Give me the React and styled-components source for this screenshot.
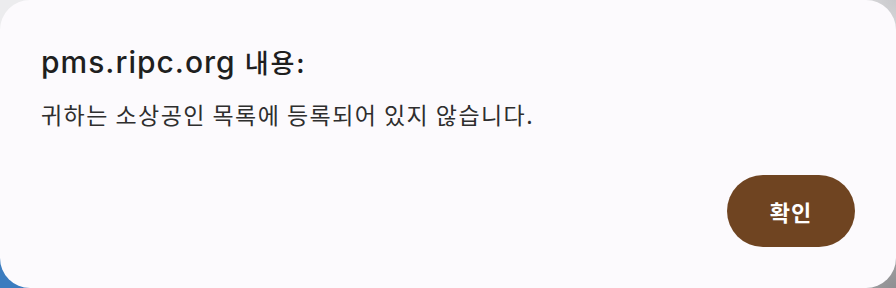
import React from 'react';
import styled, { createGlobalStyle } from 'styled-components';

const GlobalStyle = createGlobalStyle`
  html, body {
    margin: 0;
    padding: 0;
  }
  body {
    width: 896px;
    height: 288px;
    overflow: hidden;
  }
`;

const Backdrop = styled.div`
  width: 896px;
  height: 288px;
  background:
    radial-gradient(circle at 0% 100%, #3b7cbf 0, #3b7cbf 40px, transparent 41px),
    radial-gradient(circle at 100% 100%, #8f8f92 0, #a4a4a6 40px, transparent 41px),
    radial-gradient(circle at 100% 0%, #c9c9cc 0, #dcdcde 40px, transparent 41px),
    #ececee;
`;

const Dialog = styled.div`
  box-sizing: border-box;
  width: 896px;
  height: 288px;
  border-radius: 30px;
  background: #fcfafd;
  padding: 43px 41px 41px 41px;
  display: flex;
  flex-direction: column;
  font-family: Inter, "Noto Sans CJK KR", sans-serif;
`;

const Title = styled.h1`
  margin: 0;
  font-size: 30px;
  font-weight: 500;
  line-height: 38px;
  letter-spacing: 1px;
  color: #1f1f1f;
`;

const TitleSuffix = styled.span`
  font-family: "Noto Sans CJK KR", sans-serif;
  font-size: 26px;
  font-weight: 500;
  letter-spacing: 2px;
`;

const Message = styled.p`
  margin: 18px 0 0 0;
  font-family: "Noto Sans CJK KR", sans-serif;
  font-size: 23px;
  font-weight: 400;
  line-height: 30px;
  letter-spacing: 1.45px;
  color: #2e2e2e;
`;

const Actions = styled.div`
  margin-top: auto;
  display: flex;
  justify-content: flex-end;
`;

const Button = styled.button`
  width: 128px;
  height: 72px;
  border: none;
  border-radius: 36px;
  background: #6f4421;
  color: #ffffff;
  font-family: "Noto Sans CJK KR", sans-serif;
  font-size: 22px;
  font-weight: 700;
  letter-spacing: 1px;
  cursor: pointer;
`;

export default function App() {
  return (
    <>
      <GlobalStyle />
      <Backdrop>
        <Dialog>
          <Title>
            pms.ripc.org <TitleSuffix>내용:</TitleSuffix>
          </Title>
          <Message>귀하는 소상공인 목록에 등록되어 있지 않습니다.</Message>
          <Actions>
            <Button>확인</Button>
          </Actions>
        </Dialog>
      </Backdrop>
    </>
  );
}
